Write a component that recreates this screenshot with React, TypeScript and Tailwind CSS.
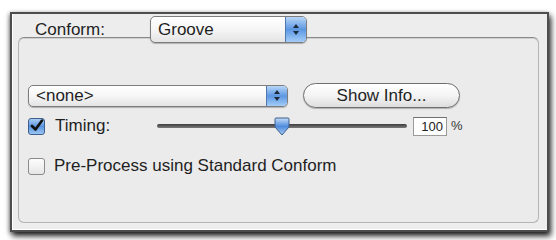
import React from 'react';

const font = { fontFamily: '"Liberation Sans", Arial, sans-serif' };

function Arrows() {
  return (
    <svg width="8" height="13" viewBox="0 0 8 13">
      <path d="M4 1 L7 5 L1 5 Z" fill="#1d2a3a" />
      <path d="M4 12 L7 8 L1 8 Z" fill="#1d2a3a" />
    </svg>
  );
}

function PopUp({ label, width, height }: { label: string; width: string; height: string }) {
  return (
    <div
      className={`${width} ${height} flex items-stretch rounded-[5px] border border-[#7d7d7d] bg-gradient-to-b from-white via-[#f6f6f6] to-[#e4e4e4] shadow-[0_1px_1px_rgba(0,0,0,0.25)] overflow-hidden`}
    >
      <span className="flex-1 flex items-center pl-[7px] text-[17px] text-[#1f1f1f] leading-none">{label}</span>
      <span className="w-[21px] flex items-center justify-center border-l border-[#4f78ad] bg-gradient-to-b from-[#b7d6f7] via-[#5c97e2] to-[#a4cdf7]">
        <Arrows />
      </span>
    </div>
  );
}

function CheckBox({ checked }: { checked: boolean }) {
  return (
    <span
      className={`w-[17px] h-[17px] rounded-[3px] border flex items-center justify-center ${
        checked
          ? 'border-[#3c5f8e] bg-gradient-to-b from-[#a8cdf5] via-[#5a93dd] to-[#9cc6f3]'
          : 'border-[#8a8a8a] bg-gradient-to-b from-[#fdfdfd] to-[#e6e6e6]'
      }`}
    >
      {checked && (
        <svg width="15" height="15" viewBox="0 0 15 15">
          <path d="M3 7 L6.5 10.5 L13 1.5" fill="none" stroke="#111" strokeWidth="2.6" strokeLinecap="round" strokeLinejoin="round" />
        </svg>
      )}
    </span>
  );
}

function Slider() {
  return (
    <div className="relative w-[250px] h-[20px] flex items-center">
      <div className="w-full h-[4px] rounded-full bg-gradient-to-b from-[#3d3d3d] to-[#7a7a7a]" />
      <svg className="absolute left-[115px] top-[1px]" width="20" height="20" viewBox="0 0 20 20">
        <defs>
          <linearGradient id="thumb" x1="0" y1="0" x2="0" y2="1">
            <stop offset="0" stopColor="#c3dcf8" />
            <stop offset="0.5" stopColor="#4f8bdc" />
            <stop offset="1" stopColor="#a9cff7" />
          </linearGradient>
        </defs>
        <path d="M3 2 Q3 1 4 1 L16 1 Q17 1 17 2 L17 10 L10 18 L3 10 Z" fill="url(#thumb)" stroke="#3e5f8c" strokeWidth="1" />
      </svg>
    </div>
  );
}

export default function App() {
  return (
    <div className="w-[556px] h-[240px] bg-white pl-[10px] pt-[12px]" style={font}>
      <div className="w-[539px] h-[220px] border-2 border-[#4d4d4d] bg-[#ededed] shadow-[inset_1px_-1px_0_#ffffff,2px_4px_6px_rgba(0,0,0,0.85),-1px_1px_4px_rgba(0,0,0,0.35)]">
        <div className="relative z-10 flex items-center h-[27px] mt-[2px]">
          <span className="ml-[23px] w-[115px] text-[17px] text-[#1f1f1f]">Conform:</span>
          <PopUp label="Groove" width="w-[157px]" height="h-[27px]" />
        </div>
        <div className="ml-[6px] -mt-[6px] w-[521px] h-[186px] rounded-[6px] border border-[#b4b4b4] border-t-[#8a8a8a] bg-[#ebebeb] shadow-[inset_0_1px_0_#d0d0d0]">
          <div className="flex items-center h-[25px] mt-[45px] pl-[9px]">
            <PopUp label="<none>" width="w-[260px]" height="h-[22px]" />
            <button className="ml-[15px] w-[157px] h-[25px] rounded-full border border-[#6f6f6f] bg-gradient-to-b from-white via-[#f4f4f4] to-[#dedede] shadow-[0_1px_1px_rgba(0,0,0,0.25)] text-[17px] text-[#1f1f1f] leading-none">
              Show Info...
            </button>
          </div>
          <div className="flex items-center h-[20px] mt-[8px] pl-[9px]">
            <CheckBox checked />
            <span className="ml-[10px] w-[102px] text-[17px] text-[#1f1f1f]">Timing:</span>
            <Slider />
            <span className="ml-[6px] w-[34px] h-[19px] border border-[#9a9a9a] border-t-[#707070] bg-white text-right pr-[3px] text-[13px] leading-[18px] text-[#222]">
              100
            </span>
            <span className="ml-[4px] text-[13px] text-[#333]">%</span>
          </div>
          <div className="flex items-center h-[20px] mt-[20px] pl-[9px]">
            <CheckBox checked={false} />
            <span className="ml-[9px] text-[17px] text-[#1f1f1f]">Pre-Process using Standard Conform</span>
          </div>
        </div>
      </div>
    </div>
  );
}
